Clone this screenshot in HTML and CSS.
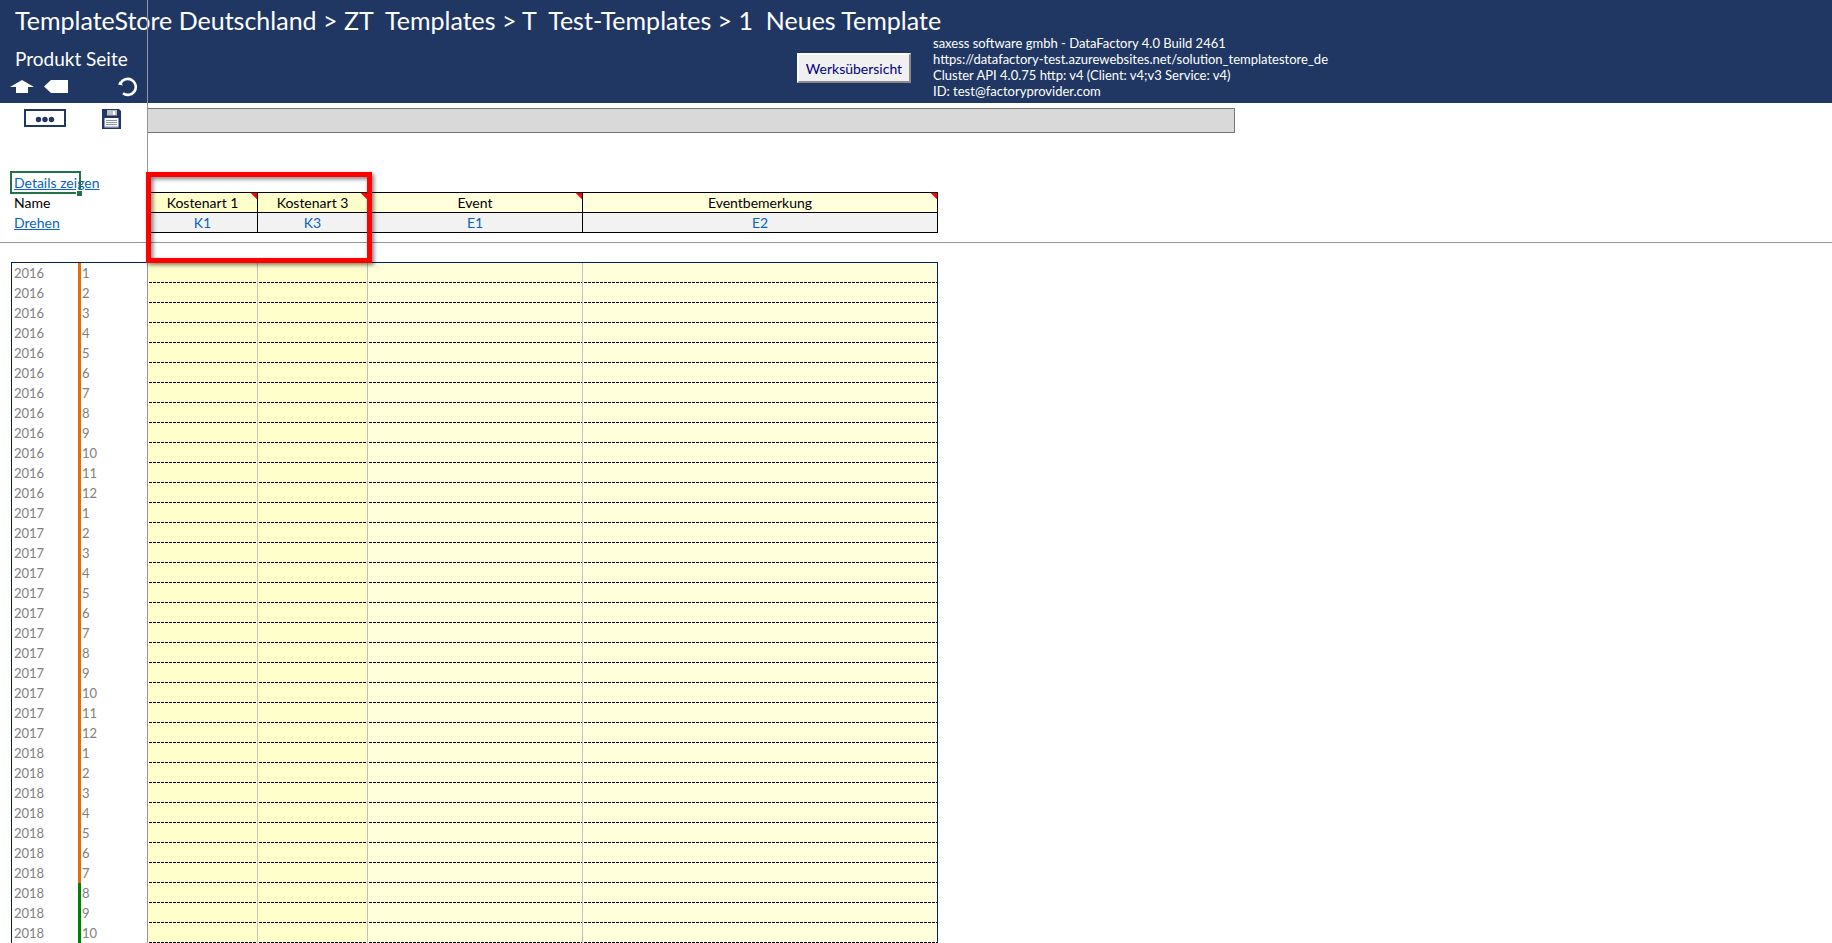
FILE: index.html
```html
<!DOCTYPE html>
<html lang="de">
<head>
<meta charset="utf-8">
<title>Produkt Seite</title>
<link rel="stylesheet" href="styles.css">
</head>
<body>
<div class="page">
  <header class="header">
    <h1 class="breadcrumb">TemplateStore Deutschland &gt; ZT  Templates &gt; T  Test-Templates &gt; 1  Neues Template</h1>
    <div class="header-row">
      <div class="page-nav">
        <h2 class="page-name">Produkt Seite</h2>
        <div class="nav-icons">
          <button class="icon-button" aria-label="Nach oben"><svg width="24" height="14" viewBox="0 0 24 14"><path fill="#fff" d="M12 0 24 7H18V13H6V7H0Z"/></svg></button>
          <button class="icon-button" aria-label="Zurück"><svg width="24" height="14" viewBox="0 0 24 14"><path fill="#fff" d="M0 6.500 7 0H24V13H7Z"/></svg></button>
          <button class="icon-button reload" aria-label="Neu laden"><svg width="20" height="20" viewBox="0 0 20 20"><path fill="none" stroke="#fff" stroke-width="2.600" d="M2.500 6.500A8 8 0 1 1 5 16.300"/><path fill="#fff" d="M0 7.500 2 4 5 8.500Z"/></svg></button>
        </div>
      </div>
      <button class="overview">Werksübersicht</button>
      <p class="info">saxess software gmbh - DataFactory 4.0 Build 2461<br>https://datafactory-test.azurewebsites.net/solution_templatestore_de<br>Cluster API 4.0.75 http: v4 (Client: v4;v3 Service: v4)<br>ID: test@factoryprovider.com</p>
    </div>
  </header>
  <div class="toolbar">
    <div class="tools">
      <button class="icon-button" aria-label="Mehr"><svg width="42" height="18" viewBox="0 0 42 18"><rect x="1" y="1" width="40" height="16" fill="#fff" stroke="#203764" stroke-width="2"/><g fill="#203764"><circle cx="14.500" cy="10.500" r="2.700"/><circle cx="21" cy="10.500" r="2.700"/><circle cx="27.500" cy="10.500" r="2.700"/></g></svg></button>
      <button class="icon-button" aria-label="Speichern"><svg width="19" height="20" viewBox="0 0 19 20"><path fill="#203764" d="M0 0H17L19 2V20H0Z"/><path fill="#bfbfbf" d="M5 1H15V6.500H5Z"/><path fill="#fff" d="M11 2H13V6H11ZM2.500 9H16.500V18H2.500Z"/><path stroke="#8690aa" d="M4 11.500H15M4 13.500H15M4 15.500H15"/><path fill="#7a86a5" d="M2.500 17.500H16.500V19H2.500Z"/></svg></button>
    </div>
    <div class="status-bar"></div>
  </div>
  <section class="columns">
    <table class="sheet head">
      <colgroup><col class="c-year"><col class="c-month"><col class="c-cost"><col class="c-cost"><col class="c-event"><col></colgroup>
      <tbody>
        <tr><td colspan="2" class="label selected"><a href="#details">Details zeigen</a></td><td colspan="4" class="blank"></td></tr>
        <tr class="names"><td colspan="2" class="label">Name</td><th class="cost">Kostenart 1</th><th class="cost">Kostenart 3</th><th>Event</th><th>Eventbemerkung</th></tr>
        <tr class="codes"><td colspan="2" class="label"><a href="#drehen">Drehen</a></td><td>K1</td><td>K3</td><td>E1</td><td>E2</td></tr>
      </tbody>
    </table>
    <div class="marker"></div>
  </section>
  <table class="sheet data">
    <colgroup><col class="c-year"><col class="c-month"><col class="c-cost"><col class="c-cost"><col class="c-event"><col></colgroup>
    <tbody id="rows"></tbody>
  </table>
  <div class="freeze-line"></div>
</div>
<script src="rows.js"></script>
</body>
</html>
```
FILE: styles.css
```css
*, *::before, *::after { box-sizing: border-box; }
body {
  margin: 0;
  background: #fff;
  color: #000;
  font: 14px/20px Lato, sans-serif;
}
.page { position: relative; min-height: 100vh; overflow: hidden; }
.icon-button { display: flex; padding: 0; border: 0; background: none; }

.header { height: 103px; padding: 5px 0 0 15px; background: #203764; color: #fff; }
.breadcrumb { margin: 0; font-size: 25px; line-height: 30px; font-weight: 400; white-space: pre; }
.header-row { display: flex; align-items: flex-start; }
.page-nav { width: 782px; padding-top: 12px; }
.page-name { margin: 0; font-size: 19px; line-height: 24px; font-weight: 400; }
.nav-icons { display: flex; align-items: center; gap: 10px; height: 31px; margin-left: -5px; }
.reload { margin-left: 40px; }
.overview {
  width: 114px;
  height: 30px;
  margin: 18px 22px 0 0;
  padding: 0;
  border: 2px solid;
  border-color: #fff #8a8a8a #8a8a8a #fff;
  background: #f0f0f0;
  color: #000080;
  font: 14px Lato, sans-serif;
}
.info { margin: 0; font-size: 13px; line-height: 16px; }

.toolbar { display: flex; height: 70px; padding-top: 5px; }
.tools { display: flex; align-items: flex-start; gap: 36px; width: 147px; padding: 1px 0 0 24px; }
.status-bar { width: 1088px; height: 25px; border: 1px solid #767676; background: #d9d9d9; }

.columns { position: relative; height: 70px; border-bottom: 1px solid #969696; }
.sheet { table-layout: fixed; width: 927px; margin-left: 11px; border-collapse: separate; border-spacing: 0; }
.c-year { width: 67px; }
.c-month { width: 70px; }
.c-cost { width: 110px; }
.c-event { width: 215px; }
.data .c-year { width: 66px; }
.sheet td, .sheet th { height: 20px; padding: 0; line-height: 18px; font-weight: 400; }
.sheet .label { padding-left: 3px; text-align: left; }
.label a { color: #0563c1; }
.head .blank { border-bottom: 1px solid #000; }
.names th, .codes td:not(.label) { border: solid #000; border-width: 0 1px 1px 0; text-align: center; }
.names th {
  background: linear-gradient(225deg, #f00 4px, transparent 5px) #ffffdc;
}
.names th.cost { background-color: #ffffcc; }
.codes td:not(.label) { background: #f2f2f2; color: #0563c1; }
.selected { position: relative; }
.selected::before {
  content: "";
  position: absolute;
  top: -2px;
  left: -1px;
  width: 71px;
  height: 23px;
  border: 2px solid #217346;
}
.selected::after {
  content: "";
  position: absolute;
  top: 17px;
  left: 65px;
  width: 6px;
  height: 6px;
  border: solid #fff;
  border-width: 1px 0 0 1px;
  background: #217346;
}
.marker {
  position: absolute;
  z-index: 2;
  top: -1px;
  left: 146px;
  width: 226px;
  height: 91px;
  border: 5px solid #f00;
  box-shadow: 2px 2px 4px rgba(0, 0, 0, .5), inset 2px 2px 4px rgba(0, 0, 0, .5);
}

.data {
  margin-top: 19px;
  border: solid #002060;
  border-width: 1px 1px 0;
  color: #808080;
  font-size: 13px;
}
.data td {
  border-right: 1px solid #c0c0c0;
  background: linear-gradient(90deg, transparent 1px, #000 1px) 0 100% / 4px 1px repeat-x #ffffdc;
}
.data td.year { padding-left: 2px; border: 0; background: none; }
.data td.month { padding-left: 1px; border: 0; border-left: 3px solid #e46c0a; background: none; }
.data td.future { border-left-color: #008000; }
.data td.cost { background-color: #ffffcc; }
.data td:last-child { border-right: 0; }
.freeze-line { position: absolute; top: 0; bottom: 0; left: 147px; width: 1px; background: #969696; }
```
FILE: rows.js
```js
const body = document.getElementById("rows");
for (let i = 0; i < 34; i++) {
  const year = 2016 + Math.floor(i / 12);
  const month = (i % 12) + 1;
  const future = i > 30 ? " future" : "";
  body.insertAdjacentHTML("beforeend",
    `<tr><td class="year">${year}</td><td class="month${future}">${month}</td>` +
    `<td class="cost"></td><td class="cost"></td><td></td><td></td></tr>`);
}
```
